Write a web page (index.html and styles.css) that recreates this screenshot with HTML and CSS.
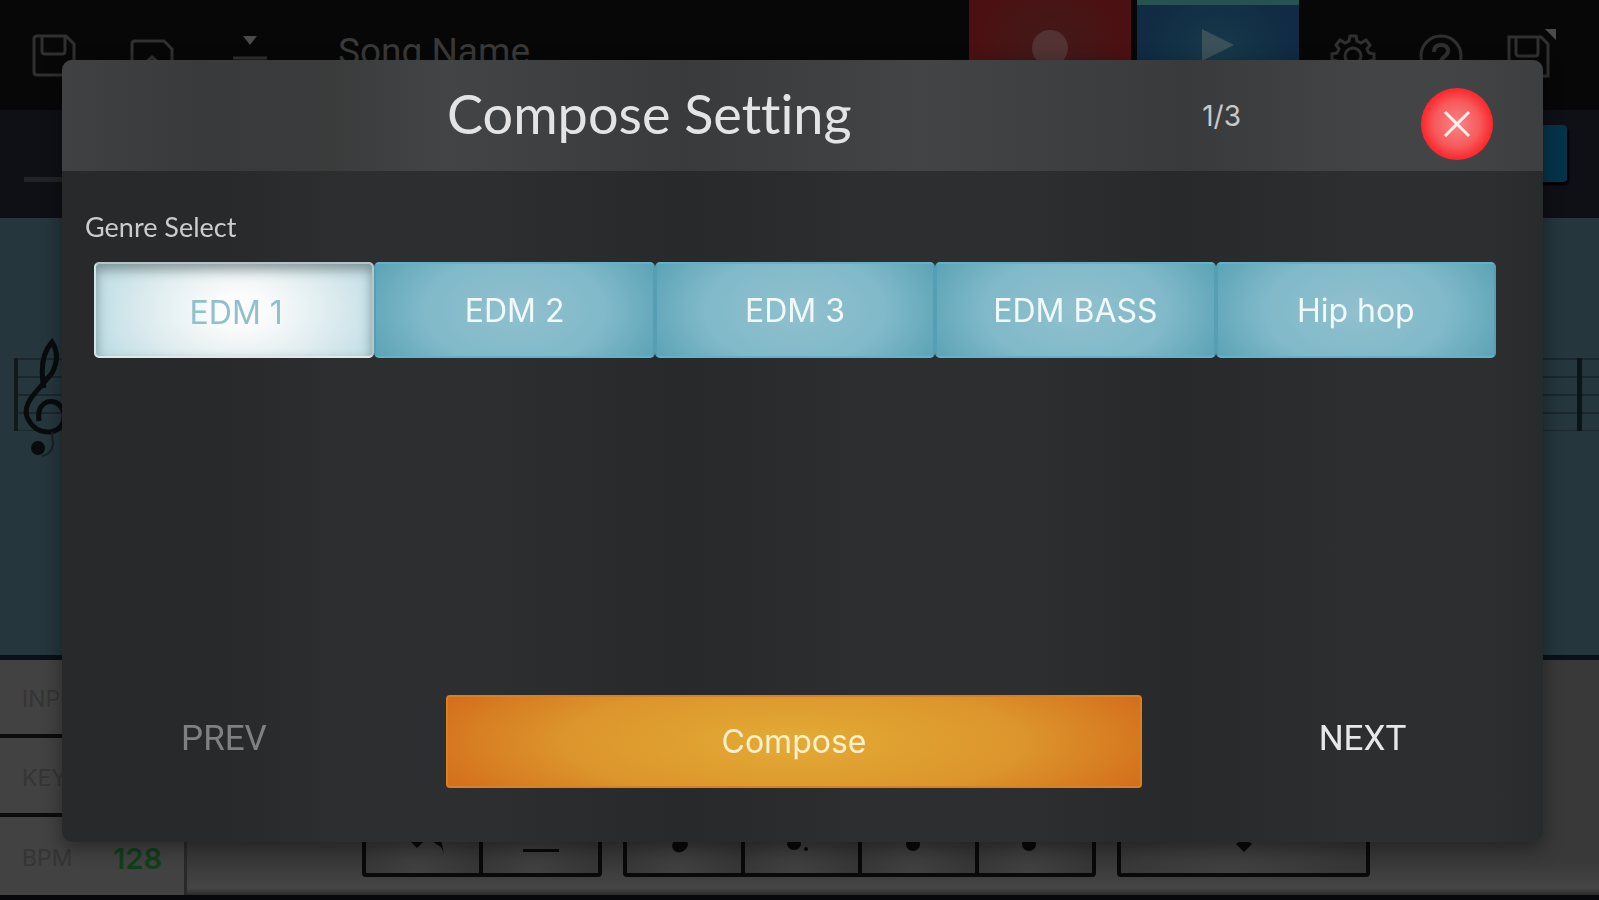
FILE: index.html
```html
<!DOCTYPE html>
<html lang="en">
<head>
<meta charset="utf-8">
<title>Compose Setting</title>
<link rel="stylesheet" href="styles.css">
</head>
<body>
<div class="app">
  <header class="topbar">
    <div class="tools">
      <svg class="icon" viewBox="0 0 44 44"><path d="M5 2h29l8 8v27q0 4-4 4H5q-3 0-3-3V5q0-3 3-3zM10 2v15q0 3 3 3h17q3 0 3-3V2"/></svg>
      <svg class="icon" viewBox="0 0 44 44"><path d="M5 7h29l8 8v27H2V10q0-3 3-3zM14 30l8-7 8 7"/></svg>
      <svg class="icon" viewBox="0 0 44 44"><path d="M5 24h34"/><path class="solid" d="M15 2h14l-7 9z"/></svg>
    </div>
    <span class="song">Song Name</span>
    <div class="transport">
      <div class="record"><svg viewBox="0 0 40 40"><circle cx="20" cy="20" r="18"/></svg></div>
      <div class="play"><svg viewBox="0 0 40 40"><path d="M4 4l32 16L4 36z"/></svg></div>
    </div>
    <div class="tools tools-right">
      <svg class="icon" viewBox="0 0 44 44"><path d="M18 7l1-5h6l1 5 4 2 5-3 4 5-3 4 2 4 5 1v6l-5 1-2 4 3 4-5 5-4-3-4 2-1 5h-6l-1-5-4-2-5 3-4-5 3-4-2-4-5-1v-6l5-1 2-4-3-4 4-5 5 3z"/><circle cx="22" cy="22" r="8"/></svg>
      <svg class="icon" viewBox="0 0 44 44"><circle cx="22" cy="22" r="20"/><path class="thick" d="M15 18q0-7 7-7t7 6q0 3-4 6-3 2-3 6M22 31v4"/></svg>
      <svg class="icon" viewBox="0 0 54 44"><path d="M2 3h32l7 7v32H2zM9 3v16q0 3 3 3h16q3 0 3-3V3"/><path class="solid" d="M38-5h11V6z"/></svg>
    </div>
  </header>
  <div class="subbar"><span class="track"></span><span class="chip"></span></div>
  <main class="score">
    <div class="staff">
      <svg class="clef" viewBox="0 0 60 124"><path d="M26 50Q20 20 34 4Q43 18 34 35L17 55Q4 70 10 81Q17 95 33 94Q48 90 46 75Q41 61 29 64Q19 68 21 83" fill="none" stroke="#080c0e" stroke-width="5"/><path d="M34 94l1 12q-1 10-11 12" fill="none" stroke="#172124" stroke-width="2"/><circle cx="20" cy="110" r="7" fill="#080c0e"/></svg>
      <span class="bar"></span>
    </div>
  </main>
  <section class="panel">
    <div class="params">
      <div class="param"><span>INPUT</span></div>
      <div class="param"><span>KEY</span></div>
      <div class="param"><span>BPM</span><b>128</b></div>
    </div>
    <div class="keys">
      <div class="group two">
        <div class="key"><svg viewBox="0 0 60 40"><path d="M16 0h16l-8 8zM38 0h10l3 14q-2-8-8-10z"/></svg></div>
        <div class="key"><svg viewBox="0 0 60 40"><path d="M12 9h36v3H12z"/></svg></div>
      </div>
      <div class="group four">
        <div class="key"><svg viewBox="0 0 60 40"><ellipse cx="26" cy="5" rx="8" ry="7" transform="rotate(-25 26 5)"/></svg></div>
        <div class="key"><svg viewBox="0 0 60 40"><ellipse cx="22" cy="4" rx="7" ry="6"/><circle cx="34" cy="9" r="2"/></svg></div>
        <div class="key"><svg viewBox="0 0 60 40"><circle cx="24" cy="4" r="7"/></svg></div>
        <div class="key"><svg viewBox="0 0 60 40"><circle cx="23" cy="4" r="7"/></svg></div>
      </div>
      <div class="group one">
        <div class="key"><svg viewBox="0 0 60 40"><path d="M22 4l5-4h6l5 4-8 8z"/></svg></div>
      </div>
    </div>
  </section>
</div>

<div class="dialog" role="dialog" aria-labelledby="dialog-title">
  <header class="dialog-head">
    <h1 id="dialog-title">Compose Setting</h1>
    <span class="step">1/3</span>
    <button class="close" type="button" aria-label="Close"><svg viewBox="0 0 28 28"><path d="M2 2l24 24M26 2L2 26"/></svg></button>
  </header>
  <div class="dialog-body">
    <h2>Genre Select</h2>
    <div class="genres">
      <button class="genre selected" type="button" aria-pressed="true">EDM 1</button>
      <button class="genre" type="button">EDM 2</button>
      <button class="genre" type="button">EDM 3</button>
      <button class="genre" type="button">EDM BASS</button>
      <button class="genre" type="button">Hip hop</button>
    </div>
  </div>
  <footer class="dialog-foot">
    <button class="nav prev" type="button">PREV</button>
    <button class="compose" type="button">Compose</button>
    <button class="nav" type="button">NEXT</button>
  </footer>
</div>
</body>
</html>
```

FILE: styles.css
```css
* { box-sizing: border-box; }
body {
  margin: 0;
  background: #070707;
  font-family: Inter, "Liberation Sans", sans-serif;
}
button {
  margin: 0;
  padding: 0;
  border: 0;
  background: none;
  font: inherit;
  cursor: pointer;
}
.app {
  display: flex;
  flex-direction: column;
  height: 100vh;
  overflow: hidden;
}

/* Top bar */
.topbar {
  display: flex;
  align-items: flex-start;
  height: 110px;
  padding-right: 38px;
  background: #070707;
}
.tools {
  display: flex;
  gap: 54px;
  padding: 34px 0 0 32px;
}
.tools-right { gap: 44px; }
.icon {
  height: 44px;
  overflow: visible;
  fill: none;
  stroke: #303030;
  stroke-width: 3;
}
.icon .thick { stroke-width: 4; }
.icon .solid { fill: #4a4a4a; stroke: none; }
.song {
  flex: 1;
  padding: 30px 0 0 66px;
  color: #393939;
  font-family: Roboto, sans-serif;
  font-size: 37px;
  line-height: 44px;
}
.transport { display: flex; gap: 6px; }
.record, .play {
  display: flex;
  justify-content: center;
  width: 162px;
  height: 106px;
  padding-top: 28px;
}
.record { background: radial-gradient(circle, #401a1a, #4b1112 75%); }
.record svg { width: 40px; height: 40px; fill: #523232; }
.play {
  padding-top: 20px;
  border-top: 5px solid #265350;
  background: radial-gradient(circle, #17394a, #102b43 80%);
}
.play svg { width: 40px; height: 40px; fill: #3a5159; }

.subbar {
  display: flex;
  align-items: center;
  justify-content: space-between;
  height: 108px;
  padding: 0 32px 0 24px;
  background: #0e1016;
}
.track { width: 300px; height: 5px; margin-top: 30px; background: #222328; }
.chip {
  width: 120px;
  height: 57px;
  margin-bottom: 22px;
  border-radius: 4px;
  background: #05334a;
  box-shadow: 2px 3px 2px #000;
}

/* Score */
.score {
  flex: 1;
  padding: 140px 0 0 14px;
  background: #25363d;
  border-bottom: 5px solid #0a1015;
}
.staff {
  display: flex;
  justify-content: space-between;
  height: 73px;
  padding-right: 17px;
  border-left: 4px solid #12191b;
  background: repeating-linear-gradient(#1b272b 0 2px, transparent 2px 18px);
}
.clef { width: 60px; height: 124px; margin-top: -20px; }
.bar { width: 5px; height: 73px; background: #0b1517; }

/* Bottom panel */
.panel {
  display: flex;
  height: 240px;
  border-bottom: 5px solid #07080c;
  background: linear-gradient(#393939 86%, #454545 97%, #2b2b2c);
}
.params {
  display: grid;
  grid-template-rows: 78px 79px 1fr;
  width: 187px;
  border-right: 3px solid #292929;
  background: #424242;
}
.param {
  display: flex;
  align-items: center;
  justify-content: space-between;
  padding: 4px 22px 0 22px;
  border-bottom: 4px solid #0c0c0c;
  color: #353535;
  font-size: 23px;
}
.param:last-child { border-bottom: 0; }
.param b { color: #103f1b; font-size: 29px; font-weight: 600; }
.keys {
  display: grid;
  grid-template-columns: 240fr 473fr 253fr;
  gap: 21px;
  flex: 1;
  align-items: end;
  padding: 0 229px 18px 175px;
}
.group { display: grid; border: 4px solid #090909; border-radius: 4px; }
.two { grid-template-columns: 115fr 121fr; }
.four { grid-template-columns: 115fr 118fr 118fr 118fr; }
.key {
  display: flex;
  align-items: flex-end;
  justify-content: center;
  height: 76px;
  border-left: 4px solid #090909;
  background: radial-gradient(ellipse at 45% 100%, #414141, #363636 70%);
}
.key:first-child { border-left: 0; }
.key svg { width: 60px; height: 40px; margin-bottom: -7px; fill: #090909; }

/* Dialog */
.dialog {
  position: fixed;
  inset: 60px 56px 58px 62px;
  display: flex;
  flex-direction: column;
  border-radius: 10px;
  overflow: hidden;
  background: linear-gradient(90deg, #28292a 0, #28292a 11%, #2d2e30 19%, #2d2e30 28%, #28292b 42%, #2d2e30 55%, #2d2e30 65%, #28292b 75%, #2d2e30 88%, #2d2e30 96%, #282b2c);
  box-shadow: 0 6px 20px rgba(0, 0, 0, .4);
}
.dialog-head {
  display: flex;
  align-items: center;
  height: 111px;
  padding: 0 50px 0 26%;
  background: linear-gradient(90deg, #404142 0, #393a3b 9%, #3a3b3b 18%, #434445 26%, #393a3b 42%, #434445 58%, #393a3b 76%, #434445 88%, #434445 94%, #3d3e3f);
}
h1, h2 {
  margin: 0;
  font-family: Lato, sans-serif;
  font-weight: 400;
  font-variant-ligatures: none;
}
h1 {
  padding-bottom: 4px;
  color: #e4e4e4;
  font-size: 54px;
  line-height: 64px;
}
.step {
  margin-left: auto;
  color: #c9c9c9;
  font-size: 28px;
}
.close {
  display: flex;
  align-items: center;
  justify-content: center;
  width: 72px;
  height: 72px;
  margin: 16px 0 0 180px;
  border-radius: 50%;
  background: radial-gradient(circle, #f98080 5%, #f65a5c 45%, #fb2b2f 68%);
}
.close svg { width: 28px; height: 28px; fill: none; stroke: #fff0f0; stroke-width: 3; }
.dialog-body {
  flex: 1;
  padding: 38px 47px 0 32px;
}
h2 {
  margin: 0 0 17px -9px;
  color: #ccc;
  font-size: 27px;
  line-height: 36px;
}
.genres { display: grid; grid-template-columns: repeat(5, 1fr); }
.genre {
  height: 96px;
  border: 2px solid #62b3ca;
  border-right-color: #559eb3;
  border-left-color: #559eb3;
  border-radius: 5px;
  background: radial-gradient(ellipse 55% 100% at 50% 50%, #91c0ce, #80b9c9 60%, #5fa5b8);
  color: #f0fafc;
  font-size: 32px;
}
.genre.selected {
  padding: 5px 0 0 4px;
  border-color: #b4c3c6 #b4c7ca #dbe9ec #d5e6ea;
  background: radial-gradient(ellipse 55% 110% at 52% 50%, #fcfcfc 15%, #deecef 60%, #bddde5);
  box-shadow: inset 0 6px 12px rgba(70, 85, 90, .55);
  color: #8fc0cb;
}
.dialog-foot {
  display: grid;
  grid-template-columns: 324fr 796fr 361fr;
  align-items: center;
  padding-bottom: 54px;
}
.nav {
  padding-bottom: 6px;
  color: #e8e8e8;
  font-family: Roboto, sans-serif;
  font-size: 35px;
}
.prev { color: #808080; }
.compose {
  height: 93px;
  margin: 0 40px 0 60px;
  border: 2px solid #d98020;
  border-radius: 4px;
  background: radial-gradient(ellipse 55% 110% at 50% 50%, #e3ab35, #dc952c 60%, #d46f1c);
  color: #fff0cf;
  font-size: 32px;
}
```
